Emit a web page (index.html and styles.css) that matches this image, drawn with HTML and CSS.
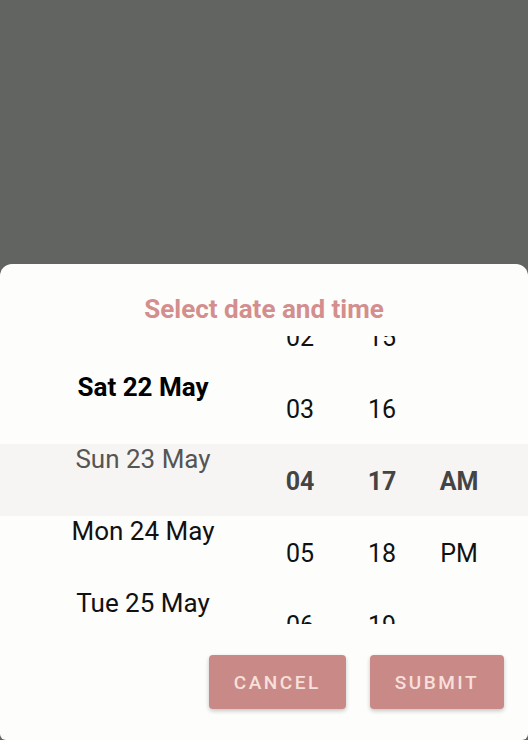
FILE: index.html
```html
<!DOCTYPE html>
<html>
<head>
<meta charset="utf-8">
<link rel="stylesheet" href="styles.css">
</head>
<body>
<div class="backdrop"></div>
<div class="sheet">
  <div class="title">Select date and time</div>
  <div class="picker">
    <div class="col col-date">
      <div class="item">Fri 21 May</div>
      <div class="item bold">Sat 22 May</div>
      <div class="item muted">Sun 23 May</div>
      <div class="item">Mon 24 May</div>
      <div class="item">Tue 25 May</div>
      <div class="item">Wed 26 May</div>
    </div>
    <div class="col col-hour">
      <div class="item">02</div>
      <div class="item">03</div>
      <div class="item sel">04</div>
      <div class="item">05</div>
      <div class="item">06</div>
    </div>
    <div class="col col-min">
      <div class="item">15</div>
      <div class="item">16</div>
      <div class="item sel">17</div>
      <div class="item">18</div>
      <div class="item">19</div>
    </div>
    <div class="col col-ampm">
      <div class="item"></div>
      <div class="item"></div>
      <div class="item sel">AM</div>
      <div class="item">PM</div>
    </div>
  </div>
  <div class="actions">
    <button class="btn">CANCEL</button>
    <button class="btn">SUBMIT</button>
  </div>
</div>
</body>
</html>
```

FILE: styles.css
```css
html, body {
  margin: 0;
  padding: 0;
}
body {
  width: 528px;
  height: 740px;
  background: #626461;
  display: flex;
  flex-direction: column;
  font-family: Roboto, "Noto Sans", sans-serif;
  overflow: hidden;
}
.backdrop {
  height: 264px;
  flex: none;
}
.sheet {
  flex: 1;
  background: #fdfdfc;
  border-radius: 12px 12px 6px 6px;
  display: flex;
  flex-direction: column;
}
.title {
  padding-top: 32px;
  line-height: 26px;
  height: 26px;
  text-align: center;
  font-size: 26px;
  font-weight: 700;
  color: #d38e8d;
  letter-spacing: 0px;
}
.picker {
  margin-top: 14px;
  height: 288px;
  overflow: hidden;
  display: grid;
  grid-template-columns: 238px 76px 88px 66px;
  padding-left: 24px;
  background: linear-gradient(to bottom, transparent 108px, #f7f5f3 108px, #f7f5f3 180px, transparent 180px);
}
.col {
  display: flex;
  flex-direction: column;
  margin-top: -35px;
}
.col-date {
  margin-top: -57px;
}
.item {
  height: 72px;
  flex: none;
  display: flex;
  align-items: center;
  justify-content: center;
  font-size: 25px;
  color: #111;
}
.col-date .item {
  font-size: 26px;
}
.item.bold {
  font-weight: 700;
  color: #000;
}
.item.muted {
  color: #555;
}
.item.sel {
  font-weight: 700;
  color: #444;
}
.actions {
  margin-top: 31px;
  display: flex;
  justify-content: flex-end;
  gap: 24px;
  padding-right: 24px;
}
.btn {
  height: 54px;
  padding: 0 25px;
  border: none;
  border-radius: 4px;
  background: #c98987;
  color: #f7e0dc;
  font-family: Roboto, sans-serif;
  font-size: 19px;
  font-weight: 500;
  letter-spacing: 2.5px;
  box-shadow: 0 2px 4px rgba(0,0,0,0.22);
}
```
